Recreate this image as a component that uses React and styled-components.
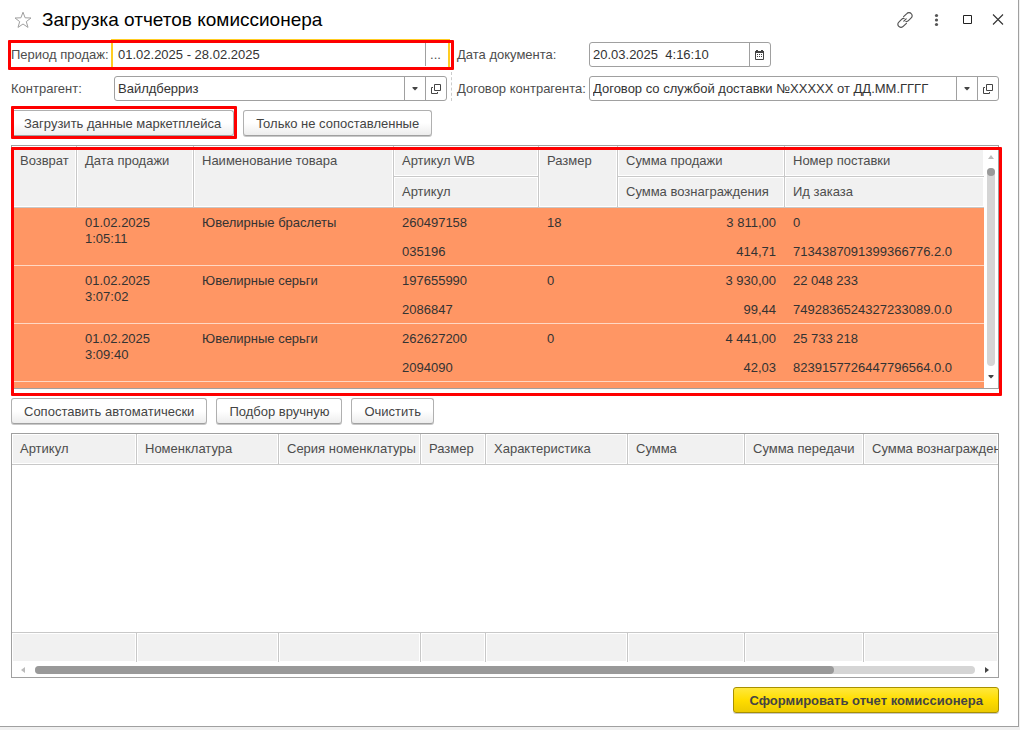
import styled, { createGlobalStyle, css } from 'styled-components'

const GlobalStyle = createGlobalStyle`
  * {
    box-sizing: border-box;
  }
  body {
    margin: 0;
    background: #f0f0f0;
    color: #4d4d4d;
    font: 13px/16px "Liberation Sans", Arial, sans-serif;
  }
  button, input {
    font: inherit;
    color: inherit;
  }
`

const sales = [
  { date: '01.02.2025', time: '1:05:11', name: 'Ювелирные браслеты', wb: '260497158', article: '035196', size: '18', sum: '3 811,00', fee: '414,71', supply: '0', order: '7134387091399366776.2.0' },
  { date: '01.02.2025', time: '3:07:02', name: 'Ювелирные серьги', wb: '197655990', article: '2086847', size: '0', sum: '3 930,00', fee: '99,44', supply: '22 048 233', order: '7492836524327233089.0.0' },
  { date: '01.02.2025', time: '3:09:40', name: 'Ювелирные серьги', wb: '262627200', article: '2094090', size: '0', sum: '4 441,00', fee: '42,03', supply: '25 733 218', order: '8239157726447796564.0.0' },
]

const salesWidths = [65, 117, 200, 145, 79, 167, null]

const goods = [
  { title: 'Артикул', width: 125 },
  { title: 'Номенклатура', width: 142 },
  { title: 'Серия номенклатуры', width: 142 },
  { title: 'Размер', width: 65 },
  { title: 'Характеристика', width: 142 },
  { title: 'Сумма', width: 117 },
  { title: 'Сумма передачи', width: 119 },
  { title: 'Сумма вознаграждения', width: null },
]

const ArrowDown = () => (
  <svg width="6" height="4" viewBox="0 0 6 4"><path d="M.5 0h5v1L3 3.500.5 1z" fill="#444" /></svg>
)

const OpenIcon = () => (
  <svg width="10" height="10" viewBox="0 0 10 10" fill="none" stroke="#444">
    <path d="M3.5.5h6v6h-6zM2 3.5H.5v6h6V8" />
  </svg>
)

const CalendarIcon = () => (
  <svg width="9" height="10" viewBox="0 0 9 10">
    <path d="M.5 1.5h8v8h-8z" fill="none" stroke="#444" />
    <path d="M0 1h9v2H0zM1 0h2v1H1zM6 0h2v1H6z" fill="#444" />
    <path d="M2 4h1v1H2zM4 4h1v1H4zM6 4h1v1H6zM2 6h1v1H2zM4 6h1v1H4zM6 6h1v1H6z" fill="#444" />
  </svg>
)

const App = () => {
  return (
    <>
      <GlobalStyle />
      <Window>
        <TitleBar>
          <IconButton aria-label="В избранное">
            <svg width="18" height="18" viewBox="0 0 18 18" fill="none" stroke="#a0a0a0">
              <path d="M9 1.2l2.1 5.6 5.9.2-4.7 3.6 1.7 5.8L9 13l-5 3.4 1.7-5.8L1 7l5.9-.2z" />
            </svg>
          </IconButton>
          <Title>Загрузка отчетов комиссионера</Title>
          <IconButton aria-label="Получить ссылку">
            <svg width="16" height="16" viewBox="0 0 16 16" fill="none" stroke="#555" strokeWidth="1.2" strokeLinecap="round">
              <path d="M6.6 4.6L9.8 1.6a2.9 2.9 0 0 1 4.4 0 2.9 2.9 0 0 1 0 4.3L11.4 8.7a2.9 2.9 0 0 1-2.6.8" />
              <path d="M9.4 11.4L6.2 14.4a2.9 2.9 0 0 1-4.4 0 2.9 2.9 0 0 1 0-4.3L4.6 7.3a2.9 2.9 0 0 1 2.6-.8" />
              <path d="M6.8 9.2l2.4-2.4" />
            </svg>
          </IconButton>
          <IconButton aria-label="Ещё">
            <svg width="16" height="16" viewBox="0 0 16 16" fill="#555">
              <circle cx="8.5" cy="3.5" r="1.6" />
              <circle cx="8.5" cy="8" r="1.6" />
              <circle cx="8.5" cy="12.5" r="1.6" />
            </svg>
          </IconButton>
          <IconButton aria-label="Развернуть">
            <svg width="16" height="16" viewBox="0 0 16 16" fill="none" stroke="#222">
              <path d="M4.5 3.5h8v8h-8z" />
            </svg>
          </IconButton>
          <IconButton aria-label="Закрыть">
            <svg width="16" height="16" viewBox="0 0 16 16" fill="none" stroke="#333" strokeWidth="1.1">
              <path d="M3 2.5l10 10M13 2.5l-10 10" />
            </svg>
          </IconButton>
        </TitleBar>

        <Form>
          <PeriodGroup>
            <Label htmlFor="period">Период продаж:</Label>
            <Field $active>
              <Input id="period" defaultValue="01.02.2025 - 28.02.2025" />
              <FieldButton aria-label="Выбрать период">...</FieldButton>
            </Field>
          </PeriodGroup>
          <Group $second>
            <Label htmlFor="date">Дата документа:</Label>
            <Field $short>
              <Input id="date" defaultValue="20.03.2025  4:16:10" />
              <FieldButton aria-label="Календарь"><CalendarIcon /></FieldButton>
            </Field>
          </Group>
          <Group>
            <Label htmlFor="partner">Контрагент:</Label>
            <Field>
              <Input id="partner" defaultValue="Вайлдберриз" />
              <FieldButton aria-label="Показать список"><ArrowDown /></FieldButton>
              <FieldButton aria-label="Открыть"><OpenIcon /></FieldButton>
            </Field>
          </Group>
          <Group $second $dashed>
            <Label htmlFor="contract">Договор контрагента:</Label>
            <Field>
              <Input id="contract" defaultValue="Договор со службой доставки №XXXXX от ДД.ММ.ГГГГ" />
              <FieldButton aria-label="Показать список"><ArrowDown /></FieldButton>
              <FieldButton aria-label="Открыть"><OpenIcon /></FieldButton>
            </Field>
          </Group>
        </Form>

        <Toolbar>
          <MarkedAction>
            <Button>Загрузить данные маркетплейса</Button>
          </MarkedAction>
          <Button>Только не сопоставленные</Button>
        </Toolbar>

        <SalesFrame>
          <SalesPanel>
            <SalesScroll>
              <Table>
                <colgroup>
                  {salesWidths.map((w, i) => <Col key={i} $width={w} />)}
                </colgroup>
                <thead>
                  <tr>
                    <HeadCell rowSpan={2}>Возврат</HeadCell>
                    <HeadCell rowSpan={2}>Дата продажи</HeadCell>
                    <HeadCell rowSpan={2}>Наименование товара</HeadCell>
                    <HeadCell>Артикул WB</HeadCell>
                    <HeadCell rowSpan={2}>Размер</HeadCell>
                    <HeadCell>Сумма продажи</HeadCell>
                    <HeadCell>Номер поставки</HeadCell>
                  </tr>
                  <tr>
                    <HeadCell>Артикул</HeadCell>
                    <HeadCell>Сумма вознаграждения</HeadCell>
                    <HeadCell>Ид заказа</HeadCell>
                  </tr>
                </thead>
                <tbody>
                  {sales.map((row) => (
                    <SaleRow key={row.order}>
                      <td />
                      <td>{row.date}<br />{row.time}</td>
                      <td>{row.name}</td>
                      <td><Line>{row.wb}</Line><Line>{row.article}</Line></td>
                      <td>{row.size}</td>
                      <NumberCell><Line>{row.sum}</Line><Line>{row.fee}</Line></NumberCell>
                      <td><Line>{row.supply}</Line><Line>{row.order}</Line></td>
                    </SaleRow>
                  ))}
                  <SaleRow><td colSpan={7} /></SaleRow>
                </tbody>
              </Table>
            </SalesScroll>
            <VerticalBar>
              <svg width="6" height="4" viewBox="0 0 6 4"><path d="M3 0l3 4H0z" fill="#bbb" /></svg>
              <VerticalTrack><VerticalThumb /></VerticalTrack>
              <ArrowDown />
            </VerticalBar>
          </SalesPanel>
        </SalesFrame>

        <Toolbar>
          <Button>Сопоставить автоматически</Button>
          <Button>Подбор вручную</Button>
          <Button>Очистить</Button>
        </Toolbar>

        <GoodsPanel>
          <GoodsScroll>
            <Table $fill>
              <colgroup>
                {goods.map((col) => <Col key={col.title} $width={col.width} />)}
              </colgroup>
              <thead>
                <tr>{goods.map((col) => <HeadCell key={col.title}>{col.title}</HeadCell>)}</tr>
              </thead>
              <tbody>
                <tr><td colSpan={8} /></tr>
              </tbody>
              <tfoot>
                <tr>{goods.map((col) => <FootCell key={col.title} />)}</tr>
              </tfoot>
            </Table>
          </GoodsScroll>
          <HorizontalBar>
            <svg width="4" height="6" viewBox="0 0 4 6"><path d="M4 0v6L0 3z" fill="#bbb" /></svg>
            <HorizontalTrack><HorizontalThumb /></HorizontalTrack>
            <svg width="4" height="6" viewBox="0 0 4 6"><path d="M0 0v6l4-3z" fill="#444" /></svg>
          </HorizontalBar>
        </GoodsPanel>

        <Footer>
          <Button $primary>Сформировать отчет комиссионера</Button>
        </Footer>
      </Window>
    </>
  )
}

const redFrame = css`
  content: "";
  position: absolute;
  border: 3px solid #fe0000;
  border-radius: 1px;
  pointer-events: none;
`

const Window = styled.main`
  display: flex;
  flex-direction: column;
  min-height: 600px;
  height: calc(100vh - 3px);
  margin-right: 1px;
  padding: 0 19px 13px 11px;
  background: #fff;
  border-right: 1px solid #a0a0a0;
  border-bottom: 1px solid #a0a0a0;
`

const TitleBar = styled.header`
  display: flex;
  align-items: center;
  gap: 15px;
  height: 39px;
  margin-right: -4px;
`

const Title = styled.h1`
  flex: 1;
  margin: 0 0 0 -2px;
  color: #000;
  font-size: 19px;
  font-weight: normal;
  line-height: 24px;
`

const IconButton = styled.button`
  display: flex;
  padding: 0 0 0 3px;
  margin-right: -3px;
  border: 0;
  background: none;
`

const Form = styled.div`
  display: grid;
  grid-template-columns: 436px 1fr;
  gap: 9px 10px;
  padding-top: 3px;
`

const Group = styled.div`
  display: grid;
  grid-template-columns: ${(p) => (p.$second ? '132px 1fr' : '103px 1fr')};
  align-items: center;
  position: relative;

  &::before {
    content: "";
    position: absolute;
    display: ${(p) => (p.$dashed ? 'block' : 'none')};
    left: -6px;
    top: -4px;
    bottom: 0;
    border-left: 1px dashed #ccc;
  }
`

const PeriodGroup = styled(Group)`
  &::after {
    ${redFrame}
    inset: -2px -7px -3px -3px;
  }
`

const Label = styled.label`
  white-space: nowrap;
`

const Field = styled.div`
  display: flex;
  height: 25px;
  width: ${(p) => (p.$short ? '182px' : 'auto')};
  border: 1px solid #a0a0a0;
  border-radius: 3px;
  background: #fff;
  ${(p) => p.$active && css`
    border-color: #fff;
    border-radius: 0;
    box-shadow: 0 0 0 1px #fff, 0 0 0 3px #fc2;
  `}
`

const Input = styled.input`
  flex: 1;
  min-width: 0;
  padding: 0 3px;
  border: 0;
  outline: 0;
  background: none;
  color: #333;
  white-space: pre;
`

const FieldButton = styled.button`
  display: flex;
  align-items: center;
  justify-content: center;
  width: 21px;
  padding: 0 1px 0 0;
  border: 0;
  border-left: 1px solid #a0a0a0;
  background: none;
`

const Toolbar = styled.div`
  display: flex;
  gap: 9px;
  padding: 9px 0;
`

const Button = styled.button`
  display: block;
  height: 26px;
  padding: 2px 12px 0;
  border: 1px solid #b0b0b0;
  border-bottom-color: #a0a0a0;
  border-radius: 3px;
  background: linear-gradient(#fff 50%, #ededed);
  box-shadow: 0 1px 0 #c8c8c8;
  color: #444;
  white-space: nowrap;
  ${(p) => p.$primary && css`
    padding: 2px 15px 0;
    border-color: #a89000;
    background: linear-gradient(#ffe83c, #fd0 50%, #ecca00);
    font-weight: bold;
  `}
`

const MarkedAction = styled.div`
  position: relative;

  &::after {
    ${redFrame}
    inset: -4px -3px -3px 0;
  }
`

const SalesFrame = styled.section`
  position: relative;

  &::after {
    ${redFrame}
    inset: 2px -3px -7px 0;
  }
`

const SalesPanel = styled.div`
  display: flex;
  height: 244px;
  border: 1px solid #a0a0a0;
`

const SalesScroll = styled.div`
  flex: 1;
  min-width: 0;
  overflow: hidden;
`

const Table = styled.table`
  width: 100%;
  height: ${(p) => (p.$fill ? '100%' : 'auto')};
  table-layout: fixed;
  border-collapse: separate;
  border-spacing: 0;
`

const Col = styled.col`
  width: ${(p) => (p.$width ? `${p.$width}px` : 'auto')};
`

const HeadCell = styled.th`
  height: 31px;
  padding: 7px 0 0 8px;
  overflow: hidden;
  border-right: 1px solid #c8c8c8;
  border-bottom: 1px solid #c8c8c8;
  background: #f1f1f1;
  box-shadow: inset 0 0 0 1px #fff;
  font-weight: normal;
  text-align: left;
  vertical-align: top;
  white-space: nowrap;

  &:last-child {
    border-right: 0;
  }
`

const FootCell = styled.td`
  height: 30px;
  padding: 0;
  border-top: 1px solid #c8c8c8;
  border-right: 1px solid #c8c8c8;
  background: #f1f1f1;
  box-shadow: inset 0 0 0 1px #fff;

  &:last-child {
    border-right: 0;
  }
`

const SaleRow = styled.tr`
  background: #ff9664;

  td {
    height: 58px;
    padding: 7px 9px 0 8px;
    border-bottom: 1px solid #ffd8c4;
    color: #333;
    vertical-align: top;
    white-space: nowrap;
  }
`

const NumberCell = styled.td`
  text-align: right;
`

const Line = styled.div`
  & + & {
    margin-top: 13px;
  }
`

const VerticalBar = styled.div`
  display: flex;
  flex-direction: column;
  align-items: center;
  gap: 9px;
  width: 14px;
  padding: 9px 0;
`

const VerticalTrack = styled.div`
  flex: 1;
  width: 8px;
  border-radius: 4px;
  background: #d5d5d5;
`

const VerticalThumb = styled.div`
  height: 8px;
  border-radius: 4px;
  background: #999;
`

const GoodsPanel = styled.section`
  display: flex;
  flex: 1;
  flex-direction: column;
  min-height: 0;
  border: 1px solid #a0a0a0;
`

const GoodsScroll = styled.div`
  flex: 1;
  min-height: 0;
  overflow: hidden;
`

const HorizontalBar = styled.div`
  display: flex;
  align-items: center;
  gap: 10px;
  height: 15px;
  padding: 0 9px;
`

const HorizontalTrack = styled.div`
  flex: 1;
  height: 8px;
  border-radius: 4px;
  background: #d5d5d5;
`

const HorizontalThumb = styled.div`
  width: 85%;
  height: 8px;
  border-radius: 4px;
  background: #999;
`

const Footer = styled.footer`
  display: flex;
  justify-content: flex-end;
  padding-top: 9px;
`

export default App
